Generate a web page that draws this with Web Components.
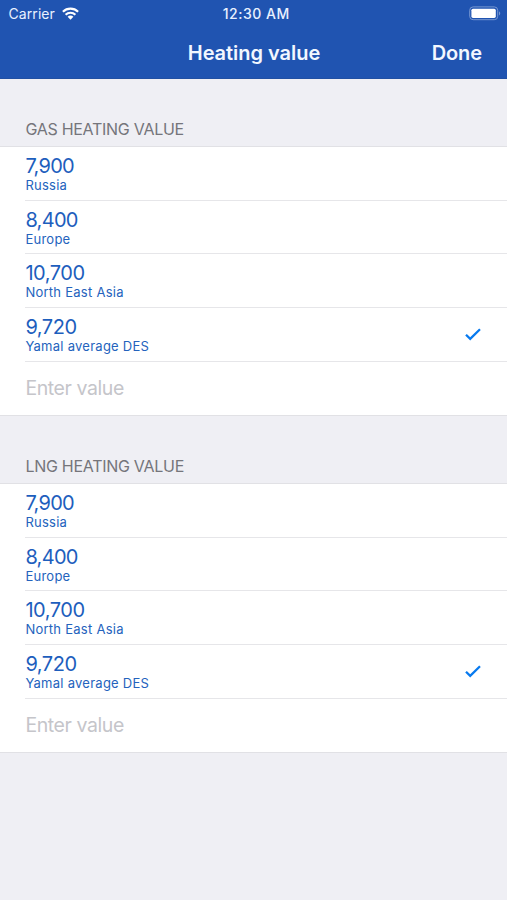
<!DOCTYPE html>
<html lang="en">
<head>
<meta charset="utf-8">
<title>Heating value</title>
<style>
html, body { margin: 0; height: 100%; background: #efeff4; }
body { font-family: Inter, "Liberation Sans", sans-serif; overflow: hidden; }
</style>
</head>
<body>
<heating-screen></heating-screen>
<script>
const define = (name, html, init) => customElements.define(name, class extends HTMLElement {
  constructor() {
    super();
    this.attachShadow({ mode: "open" }).innerHTML = html;
  }
  connectedCallback() { if (init) init(this, this.shadowRoot); }
});

define("status-bar", `
<style>
:host { display: grid; grid-template-columns: 1fr auto 1fr; align-items: center; height: 27px; padding: 0 6px 0 8.5px; color: #e9f1ff; font-size: 14px; line-height: 27px; }
.left { display: flex; align-items: center; gap: 7px; }
.carrier { letter-spacing: .08px; }
.time { font-weight: 500; letter-spacing: .5px; padding-left: 3px; }
svg { display: block; }
.battery { justify-self: end; }
</style>
<div class="left"><span class="carrier">Carrier</span>
<svg width="17" height="13" viewBox="0 0 17 13" fill="none" stroke="#fff" stroke-width="2.1"><path d="M.9 4.8C5.1.6 11.9.6 16.1 4.8M3.6 7.7C6.3 5 10.7 5 13.4 7.7"/><path d="M5.6 9.8C7.2 8.2 9.8 8.2 11.4 9.8L8.5 12.7Z" fill="#fff" stroke="none"/></svg></div>
<span class="time">12:30 AM</span>
<svg class="battery" width="32" height="15" viewBox="0 0 32 15"><rect x=".7" y=".9" width="28" height="12.8" rx="3.4" fill="none" stroke="#7797d2"/><rect x="2.4" y="2.7" width="24.4" height="9.2" rx="1.6" fill="#fff"/><path d="M30 5.2C31.7 6 31.7 8.6 30 9.4Z" fill="#7797d2"/></svg>
`);

define("nav-bar", `
<style>
:host { display: grid; grid-template-columns: 1fr auto 1fr; align-items: center; height: 52px; padding: 0 25px 0 26px; box-sizing: border-box; border-bottom: 1px solid #2150a3; color: #f2f7ff; font-size: 20px; font-weight: 600; line-height: 50px; }
.title { grid-column: 2; letter-spacing: -.03px; }
.done { justify-self: end; letter-spacing: -.1px; }
</style>
<span class="title"><slot></slot></span><span class="done"><slot name="action"></slot></span>
`);

define("check-mark", `
<style>:host { display: block; } svg { display: block; }</style>
<svg width="16" height="13" viewBox="0 0 16 13" fill="none" stroke="#087aef" stroke-width="2.3"><path d="M1 6.7L5.2 10.8L15 1.2"/></svg>
`);

define("value-row", `
<style>
:host { display: flex; padding-left: 25.4px; height: 53.7px; box-sizing: border-box; }
.body { flex: 1; display: flex; align-items: center; justify-content: space-between; padding-right: 26px; border-bottom: 1px solid #e6e6e9; }
.text { padding-top: 2.5px; }
.value { color: #1d5ebd; font-size: 20px; line-height: 22px; letter-spacing: -.7px; }
:host([wide]) .value { letter-spacing: -.45px; }
.name { color: #2463bd; font-size: 13px; line-height: 17px; letter-spacing: .26px; }
</style>
<div class="body"><div class="text"><div class="value"><slot></slot></div><div class="name"><slot name="name"></slot></div></div><slot name="mark"></slot></div>
`);

define("entry-row", `
<style>
:host { display: flex; align-items: center; padding-left: 25.4px; flex: 1; color: #c5c5ca; font-size: 19.5px; line-height: 24px; letter-spacing: -.42px; }
</style><slot></slot>
`);

define("value-section", `
<style>
:host { display: block; }
h2 { margin: 0; box-sizing: border-box; height: 67px; padding: 38px 0 0 25.4px; color: #75757b; font-size: 16px; line-height: 24px; font-weight: 400; letter-spacing: -.28px; }
.list { display: flex; flex-direction: column; height: 270px; box-sizing: border-box; background: #fff; border-top: 1px solid #e1e1e5; border-bottom: 1px solid #e1e1e5; }
</style>
<h2></h2><div class="list"><slot></slot></div>
`, (el, root) => { root.querySelector("h2").textContent = el.getAttribute("heading"); });

const rows = `
<value-row>7,900<span slot="name">Russia</span></value-row>
<value-row>8,400<span slot="name">Europe</span></value-row>
<value-row wide>10,700<span slot="name">North East Asia</span></value-row>
<value-row wide>9,720<span slot="name">Yamal average DES</span><check-mark slot="mark"></check-mark></value-row>
<entry-row>Enter value</entry-row>`;

define("heating-screen", `
<style>
:host { display: block; height: 900px; background: #efeff4; }
header { background: #2054b1; height: 79px; }
</style>
<header><status-bar></status-bar><nav-bar>Heating value<span slot="action">Done</span></nav-bar></header>
<main>
<value-section heading="GAS HEATING VALUE">${rows}</value-section>
<value-section heading="LNG HEATING VALUE">${rows}</value-section>
</main>
`);
</script>
</body>
</html>
